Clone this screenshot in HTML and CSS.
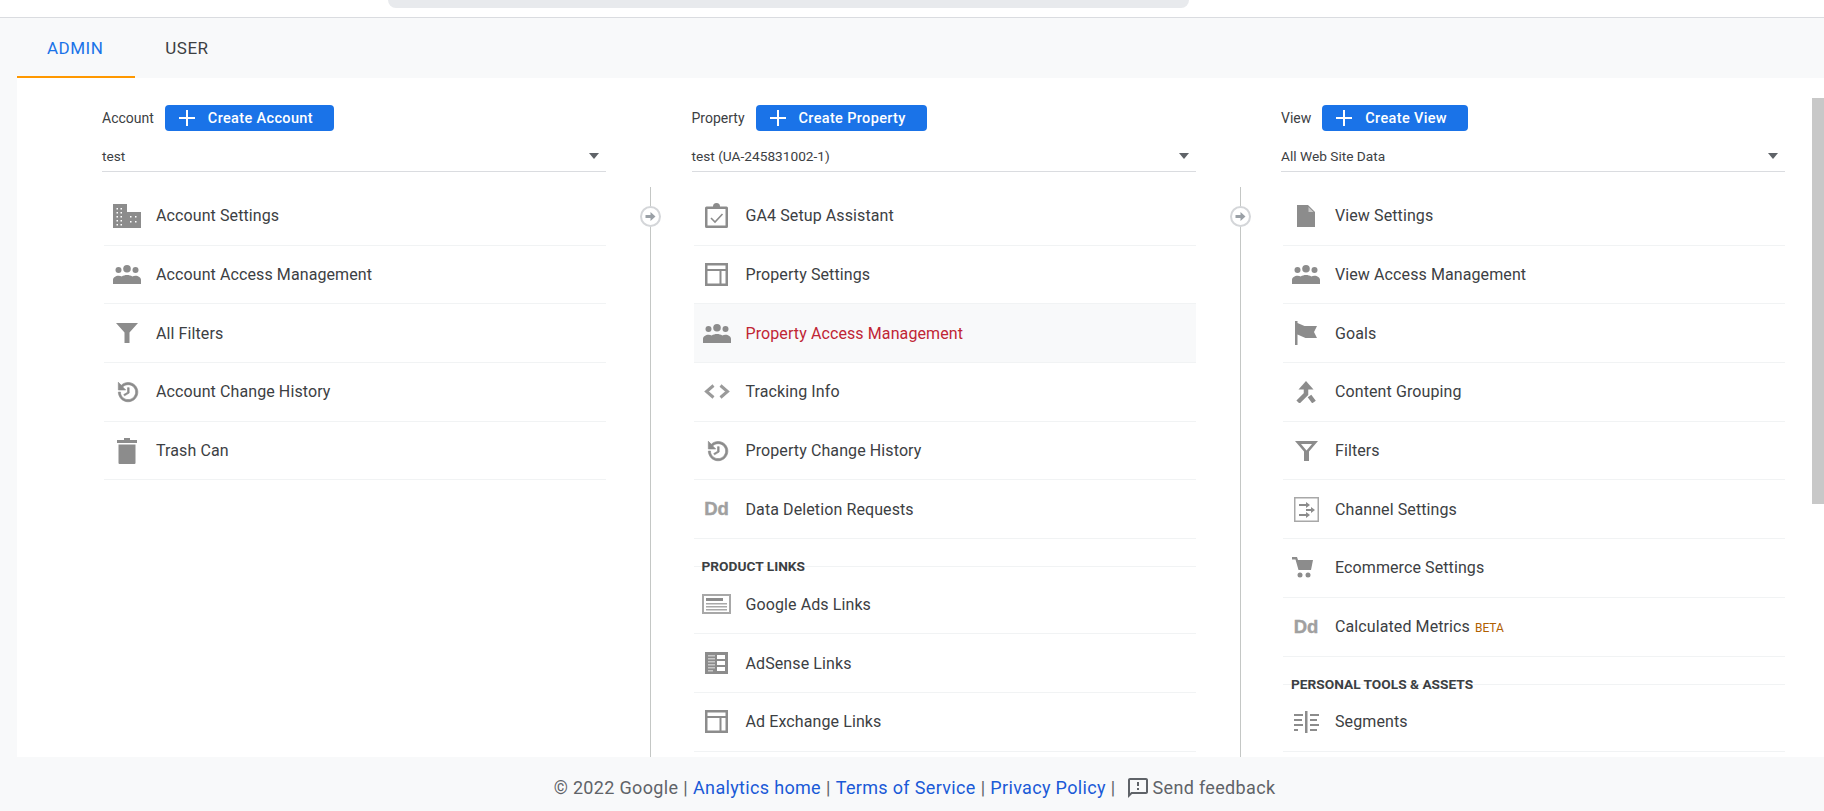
FILE: index.html
```html
<!DOCTYPE html>
<html lang="en">
<head>
    <meta charset="UTF-8">
    <title>Analytics Admin</title>
    <link rel="stylesheet" href="styles.css">
</head>
<body>
    <svg class="defs" width="0" height="0">
        <symbol id="i-plus" viewBox="0 0 16 16"><path d="M7 0h2v7h7v2H9v7H7V9H0V7h7z"/></symbol>
        <symbol id="i-people" viewBox="0 0 28 19"><circle cx="5.5" cy="5" r="3"/><circle cx="14" cy="3.8" r="3.8"/><circle cx="22.5" cy="5" r="3"/><path d="M0 19v-4c0-2.6 2.8-4.2 5.5-4.2 1.300 0 2.300.2 3.200.6 1.500-1 3.400-1.500 5.300-1.500s3.800.5 5.300 1.500c.9-.4 1.900-.6 3.200-.6 2.700 0 5.500 1.600 5.500 4.200v4z"/></symbol>
        <symbol id="i-history" viewBox="-1 0 24 24"><path class="thick" transform="translate(24 0) scale(-1 1)" d="M21 10.120h-6.780l2.740-2.820c-2.730-2.700-7.150-2.800-9.880-.1-2.730 2.710-2.730 7.080 0 9.790s7.150 2.710 9.880 0C18.320 15.650 19 14.080 19 12.100h2c0 1.980-.88 4.550-2.640 6.290-3.510 3.480-9.210 3.480-12.720 0-3.500-3.470-3.530-9.110-.02-12.580s9.140-3.470 12.650 0L21 3v7.120zM12.500 8v4.250l3.500 2.080-.72 1.210L11 13V8h1.500z"/></symbol>
        <symbol id="i-panel" viewBox="0 0 23 23"><path fill-rule="evenodd" d="M0 0h23v23H0zM2.500 2.500v3.500h18V2.500zM2.500 8v12.500h12V8zM16.500 8v12.500h4V8z"/></symbol>
        <symbol id="i-arrow" viewBox="0 0 21 21"><circle cx="10.500" cy="10.500" r="9.500" fill="#fff" stroke="#d4d6d9" stroke-width="2"/><path fill="#9aa0a6" d="M5.500 9h5V6l5 4.500-5 4.500v-3h-5z"/></symbol>
    </svg>

    <div class="topbar"><div class="search-stub"></div></div>

    <div class="tabs">
        <div class="tab tab-active">ADMIN</div>
        <div class="tab">USER</div>
    </div>

    <div class="main">
        <div class="columns">
            <!-- Account -->
            <div class="col">
                <div class="col-head">
                    <span class="col-label">Account</span>
                    <div class="btn"><svg width="16" height="16"><use href="#i-plus"/></svg>Create Account</div>
                </div>
                <div class="picker"><span>test</span><svg class="caret" width="10" height="6" viewBox="0 0 10 6"><path d="M0 0h10L5 6z"/></svg></div>
                <div class="list">
                    <div class="item">
                        <div class="item-icon"><svg width="28" height="24" viewBox="0 0 28 24"><path d="M0 0h14v8h14v16H0z"/><path class="cut" d="M3.500 4h1.500v1.500H3.500zM7.500 4h1.500v1.500H7.500zM3.500 8h1.500v1.500H3.500zM7.500 8h1.500v1.500H7.500zM3.500 12h1.500v1.500H3.500zM7.500 12h1.500v1.500H7.500zM3.500 16h1.500v1.500H3.500zM7.500 16h1.500v1.500H7.500zM3.500 20h1.500v1.500H3.500zM7.500 20h1.500v1.500H7.500zM17 12h1.500v1.500H17zM22 12h1.500v1.500H22zM17 17h1.500v1.500H17zM22 17h1.500v1.500H22z"/></svg></div>
                        Account Settings
                    </div>
                    <div class="item">
                        <div class="item-icon"><svg width="28" height="19"><use href="#i-people"/></svg></div>
                        Account Access Management
                    </div>
                    <div class="item">
                        <div class="item-icon"><svg width="22" height="20" viewBox="0 0 22 20"><path d="M0 0h22l-8.500 9.500V20h-5V9.500z"/></svg></div>
                        All Filters
                    </div>
                    <div class="item">
                        <div class="item-icon"><svg width="26" height="26"><use href="#i-history"/></svg></div>
                        Account Change History
                    </div>
                    <div class="item">
                        <div class="item-icon"><svg width="20" height="26" viewBox="0 0 20 26"><path d="M7 0h6v2h7v3H0V2h7zM1.500 6.500h17V25a1 1 0 0 1-1 1h-15a1 1 0 0 1-1-1z"/></svg></div>
                        Trash Can
                    </div>
                </div>
            </div>

            <!-- Property -->
            <div class="col">
                <div class="connector"><svg class="connector-dot" width="21" height="21"><use href="#i-arrow"/></svg></div>
                <div class="col-head">
                    <span class="col-label">Property</span>
                    <div class="btn"><svg width="16" height="16"><use href="#i-plus"/></svg>Create Property</div>
                </div>
                <div class="picker"><span>test (UA-245831002-1)</span><svg class="caret" width="10" height="6" viewBox="0 0 10 6"><path d="M0 0h10L5 6z"/></svg></div>
                <div class="list">
                    <div class="item">
                        <div class="item-icon"><svg width="23" height="25" viewBox="0 0 23 25"><path fill-rule="evenodd" d="M8 3.500a3.500 3.500 0 0 1 7 0h6.500A1.500 1.500 0 0 1 23 5v18.500a1.500 1.500 0 0 1-1.500 1.500h-20A1.500 1.500 0 0 1 0 23.500V5a1.500 1.500 0 0 1 1.500-1.500zM2.500 6v16.500h18V6z"/><path class="thin" d="M6 15l4 4 7.500-8"/></svg></div>
                        GA4 Setup Assistant
                    </div>
                    <div class="item">
                        <div class="item-icon"><svg width="23" height="23"><use href="#i-panel"/></svg></div>
                        Property Settings
                    </div>
                    <div class="item item-active">
                        <div class="item-icon"><svg width="28" height="19"><use href="#i-people"/></svg></div>
                        Property Access Management
                    </div>
                    <div class="item">
                        <div class="item-icon"><svg width="26" height="15" viewBox="0 0 26 15"><path class="code" d="M9.500 1.500l-7 6 7 6M16.500 1.500l7 6-7 6"/></svg></div>
                        Tracking Info
                    </div>
                    <div class="item">
                        <div class="item-icon"><svg width="26" height="26"><use href="#i-history"/></svg></div>
                        Property Change History
                    </div>
                    <div class="item">
                        <div class="item-icon"><span class="dd">Dd</span></div>
                        Data Deletion Requests
                    </div>
                </div>
                <div class="section"><span>PRODUCT LINKS</span></div>
                <div class="list">
                    <div class="item">
                        <div class="item-icon"><svg class="icon-light" width="29" height="20" viewBox="0 0 29 20"><path fill-rule="evenodd" d="M0 0h29v20H0zM2 2v16h25V2z"/><path class="bar-dark" d="M4 4h17v3H4z"/><path d="M4 9h21v1.500H4zM4 12h21v1.500H4zM4 15h21v1.500H4z"/></svg></div>
                        Google Ads Links
                    </div>
                    <div class="item">
                        <div class="item-icon"><svg width="23" height="22" viewBox="0 0 23 22"><path d="M0 0h23v22H0z"/><path class="cut" d="M12 3h8v4h-8zM12 9h8v4h-8zM12 15h8v4h-8z"/><path class="cut-soft" d="M3 3h7v1.500H3zM3 6h7v1.500H3zM3 9h7v1.500H3zM3 12h7v1.500H3zM3 15h7v1.500H3zM3 18h5v1.500H3z"/></svg></div>
                        AdSense Links
                    </div>
                    <div class="item">
                        <div class="item-icon"><svg width="23" height="23"><use href="#i-panel"/></svg></div>
                        Ad Exchange Links
                    </div>
                </div>
            </div>

            <!-- View -->
            <div class="col">
                <div class="connector"><svg class="connector-dot" width="21" height="21"><use href="#i-arrow"/></svg></div>
                <div class="col-head">
                    <span class="col-label">View</span>
                    <div class="btn"><svg width="16" height="16"><use href="#i-plus"/></svg>Create View</div>
                </div>
                <div class="picker"><span>All Web Site Data</span><svg class="caret" width="10" height="6" viewBox="0 0 10 6"><path d="M0 0h10L5 6z"/></svg></div>
                <div class="list">
                    <div class="item">
                        <div class="item-icon"><svg width="18" height="22" viewBox="0 0 18 22"><path d="M0 0h11l7 7v15H0z"/><path class="cut-soft" d="M11.500 2v5h5z"/></svg></div>
                        View Settings
                    </div>
                    <div class="item">
                        <div class="item-icon"><svg width="28" height="19"><use href="#i-people"/></svg></div>
                        View Access Management
                    </div>
                    <div class="item">
                        <div class="item-icon"><svg width="22" height="24" viewBox="0 0 22 24"><path d="M0 0h2.500v2l7 3h12.500l-3 6 3 6H10.500l-8-3.500V24H0z"/></svg></div>
                        Goals
                    </div>
                    <div class="item">
                        <div class="item-icon"><svg width="20" height="22" viewBox="0 0 20 22"><path d="M10 0l7.500 8.500h-15z"/><path class="merge" d="M2 21l8-8V6M13.500 15l4.500 6"/></svg></div>
                        Content Grouping
                    </div>
                    <div class="item">
                        <div class="item-icon"><svg width="23" height="20" viewBox="0 0 23 20"><path fill-rule="evenodd" d="M0 0h23l-9 10.500V20H9V10.500zM6 3l5.500 6.500L17 3z"/></svg></div>
                        Filters
                    </div>
                    <div class="item">
                        <div class="item-icon"><svg width="25" height="25" viewBox="0 0 25 25"><path class="icon-light" fill-rule="evenodd" d="M0 0h25v25H0zM1.500 1.500v22h22v-22z"/><path d="M5 7h7V5l4 3-4 3V9H5zM12 12h5v-2l4 3-4 3v-2h-5zM5 17h7v-2l4 3-4 3v-2H5z"/></svg></div>
                        Channel Settings
                    </div>
                    <div class="item">
                        <div class="item-icon"><svg width="28" height="21" viewBox="0 0 28 21"><path d="M0 0h5l1 3h15l-2 10H6.500L3.500 2.500H0z"/><circle cx="8" cy="18" r="2.500"/><circle cx="16" cy="18" r="2.500"/></svg></div>
                        Ecommerce Settings
                    </div>
                    <div class="item">
                        <div class="item-icon"><span class="dd">Dd</span></div>
                        Calculated Metrics<span class="beta">BETA</span>
                    </div>
                </div>
                <div class="section"><span>PERSONAL TOOLS &amp; ASSETS</span></div>
                <div class="list">
                    <div class="item">
                        <div class="item-icon"><svg width="25" height="22" viewBox="0 0 25 22"><path d="M11 0h2.500v22H11zM0 3h9v2H0zM0 8h8v2H0zM0 13h9v2H0zM0 18h4v2H0zM16 3h9v2h-9zM16 8h7v2h-7zM16 13h9v2h-9zM16 18h7v2h-7z"/></svg></div>
                        Segments
                    </div>
                </div>
            </div>
        </div>
        <div class="scrollbar"><div class="scroll-thumb"></div></div>
    </div>

    <div class="footer">
        <span>© 2022 Google</span><span class="sep">|</span>
        <a href="#">Analytics home</a><span class="sep">|</span>
        <a href="#">Terms of Service</a><span class="sep">|</span>
        <a href="#">Privacy Policy</a><span class="sep">|</span>
        <span class="feedback"><svg width="24" height="24" viewBox="0 0 24 24"><path d="M20 2H4c-1.100 0-2 .9-2 2v18l4-4h14c1.100 0 2-.9 2-2V4c0-1.100-.9-2-2-2zm0 14H5.170L4 17.170V4h16v12zM11 12h2v2h-2zm0-6h2v4h-2z"/></svg>Send feedback</span>
    </div>
</body>
</html>
```

FILE: styles.css
```css
html, body {
    height: 100%;
}
body {
    margin: 0;
    height: 811px;
    display: flex;
    flex-direction: column;
    overflow: hidden;
    font-family: Roboto, sans-serif;
    color: #3c4043;
    background-color: #f8f9fa;
}
.defs {
    display: block;
    height: 0;
}
.topbar {
    height: 17px;
    flex-shrink: 0;
    padding-left: 388px;
    background-color: #fff;
    border-bottom: 1px solid #dadce0;
}
.search-stub {
    width: 801px;
    height: 8px;
    background-color: #e8eaed;
    border-radius: 0 0 8px 8px;
}
.tabs {
    height: 60px;
    flex-shrink: 0;
    display: flex;
    padding-left: 17px;
}
.tab {
    box-sizing: border-box;
    height: 60px;
    padding: 2px 30px 0;
    display: flex;
    align-items: center;
    font-size: 17px;
    letter-spacing: 0.5px;
    border-bottom: 2px solid transparent;
}
.tab-active {
    padding-right: 32px;
    color: #1a73e8;
    border-bottom-color: #ff9800;
}
.main {
    flex: 1;
    min-height: 0;
    display: flex;
    margin-left: 17px;
    background-color: #fff;
    overflow: hidden;
}
.columns {
    flex: 1;
    display: grid;
    grid-template-columns: repeat(3, 504px);
    column-gap: 85.5px;
    padding: 27px 0 0 85px;
}
.col {
    position: relative;
}
.connector {
    position: absolute;
    left: -41.5px;
    top: 82px;
    bottom: 0;
    width: 1px;
    background-color: #c4c7c5;
}
.connector-dot {
    position: absolute;
    left: -10px;
    top: 19px;
}
.col-head {
    display: flex;
    align-items: center;
    gap: 11px;
    height: 26px;
}
.col-label {
    font-size: 14px;
}
.btn {
    height: 26px;
    display: flex;
    align-items: center;
    gap: 13px;
    padding: 0 21px 0 14px;
    border-radius: 4px;
    background-color: #1a73e8;
    color: #fff;
    fill: #fff;
    font-size: 14.5px;
    font-weight: 500;
    letter-spacing: 0.35px;
}
.picker {
    box-sizing: border-box;
    height: 41px;
    display: flex;
    align-items: center;
    justify-content: space-between;
    padding: 9px 7px 0 0;
    border-bottom: 1px solid #dadce0;
    font-size: 13.7px;
}
.caret {
    fill: #5f6368;
}
.list {
    margin-left: 2px;
}
.col > .picker + .list {
    margin-top: 15px;
}
.item {
    box-sizing: border-box;
    height: 58.7px;
    display: flex;
    align-items: center;
    border-bottom: 1px solid #f1f3f4;
    font-size: 16px;
    letter-spacing: 0.1px;
}
.item-active {
    background-color: #f8f9fa;
    color: #c02535;
}
.item-icon {
    width: 46px;
    margin-right: 6px;
    flex-shrink: 0;
    display: flex;
    justify-content: center;
    align-items: center;
    fill: #8c8c8c;
}
.cut {
    fill: #fff;
}
.cut-soft {
    fill: #c8c8c8;
}
.thin {
    fill: none;
    stroke: #8c8c8c;
    stroke-width: 1.6;
}
.thick {
    stroke: #8c8c8c;
    stroke-width: 0.6;
}
.code {
    fill: none;
    stroke: #9a9a9a;
    stroke-width: 3;
}
.merge {
    fill: none;
    stroke: #8c8c8c;
    stroke-width: 4.5;
}
.icon-light {
    fill: #a8a8a8;
}
.bar-dark {
    fill: #8c8c8c;
}
.dd {
    font-family: "Liberation Sans", sans-serif;
    font-size: 18.5px;
    font-weight: 700;
    color: #a0a0a0;
    letter-spacing: 0;
    -webkit-text-stroke: 0.4px #a0a0a0;
}
.beta {
    margin-left: 5px;
    padding-top: 2px;
    font-size: 12px;
    letter-spacing: 0;
    color: #b06000;
}
.section {
    margin: 0 0 8.5px 2px;
    height: 28px;
    border-bottom: 1px solid #f1f3f4;
    padding-left: 8px;
    box-sizing: border-box;
}
.section span {
    display: block;
    font-size: 13.7px;
    font-weight: 700;
    line-height: 55px;
}
.scrollbar {
    width: 12px;
    flex-shrink: 0;
    padding-top: 20px;
}
.scroll-thumb {
    height: 406px;
    background-color: #c8c8c8;
}
.footer {
    height: 54px;
    flex-shrink: 0;
    display: flex;
    align-items: center;
    justify-content: center;
    padding: 7px 0 0 5px;
    box-sizing: border-box;
    font-size: 18px;
    letter-spacing: 0.33px;
    color: #5f6368;
}
.footer a {
    color: #1a5ad7;
    text-decoration: none;
}
.sep {
    margin: 0 5px;
}
.feedback {
    display: flex;
    align-items: center;
    gap: 3px;
    margin-left: 5px;
    fill: #5f6368;
}
```
